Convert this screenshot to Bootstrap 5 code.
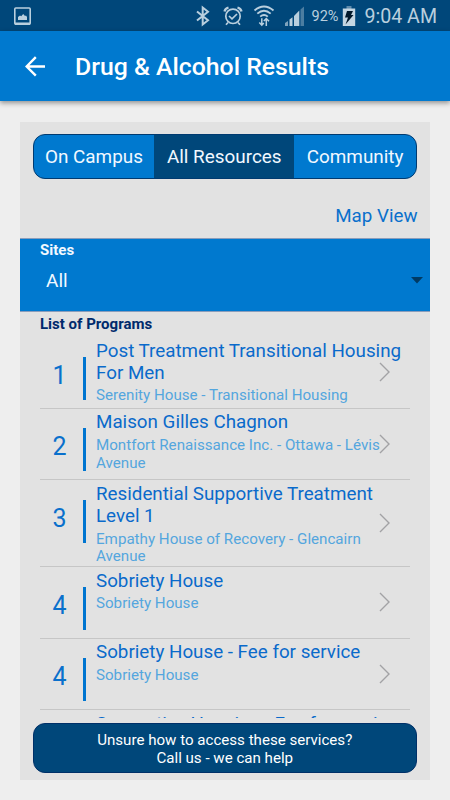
<!DOCTYPE html>
<html lang="en">
<head>
<meta charset="utf-8">
<meta name="viewport" content="width=device-width, initial-scale=1">
<title>Drug &amp; Alcohol Results</title>
<link href="https://cdn.jsdelivr.net/npm/bootstrap@5.3.0/dist/css/bootstrap.min.css" rel="stylesheet">
<style>
  body { font-family: Roboto, "Liberation Sans", sans-serif; background: #eee; height: 800px; overflow: hidden; }
  svg { display: block; flex: none; }
  .status { height: 31px; background: #00477a; color: #b9cfde; }
  .status-icons { padding-right: 13px; }
  .pct { font-size: 14.5px; line-height: 35px; padding-top: 2px; }
  .clock { font-size: 19.6px; line-height: 36px; padding-top: 2px; }
  .appbar { height: 70px; background: #0079cf; padding-left: 25px; box-shadow: 0 2px 5px rgba(0,0,0,.4); }
  .appbar h1 { font-size: 24.8px; font-weight: 500; margin-left: 29px; padding-top: 2px; white-space: nowrap; }
  .panel { width: 410px; height: 658px; margin: 21px 0 0 20px; background: #e2e2e2; }
  .segments { height: 45px; margin: 12px 13px 0 12.5px; border: 1.5px solid #003a70; border-radius: 12px; overflow: hidden; background: #0079cf; }
  .segments .btn { border: 0; border-radius: 0; padding: 2px 0 0; color: #f1f8ff; font-size: 18.9px; white-space: nowrap; }
  .segments .btn.active { background: #00477a; color: #f1f8ff; }
  .seg-a { width: 121px; } .seg-b { width: 140px; } .seg-c { width: 122px; }
  .map-link { height: 59px; padding: 26px 12.5px 0 0; font-size: 18.75px; line-height: 22px; color: #0a70cc; text-decoration: none; }
  .sites { height: 74px; background: #0079cf; border-top: 1px solid #8a9dbb; border-bottom: 1px solid #8a9dbb; color: #f1f8ff; padding: 2px 7px 0 20px; }
  .label { font-size: 15px; line-height: 18px; font-weight: 700; }
  .picked { font-size: 19px; line-height: 22px; padding: 11px 0 0 6px; }
  .caret { margin-top: 10px; }
  .programs-label { color: #002a6c; padding: 3px 0 0 20px; height: 25px; }
  .programs { height: 381px; margin: 0 20px; overflow: hidden; }
  .program { min-height: 71.7px; padding-top: 2.7px; border-bottom: 1px solid #c6c6c6; flex: none; }
  .rank { width: 43px; padding: 21px 0 0 12.5px; font-size: 25px; line-height: 29px; color: #0a70cc; flex: none; }
  .rule { width: 3px; height: 43px; margin-top: 17px; background: #0075d0; flex: none; }
  .words { padding-left: 10px; white-space: nowrap; min-width: 0; }
  .name { font-size: 18.8px; line-height: 22px; color: #0a6acb; }
  .site { font-size: 15.15px; line-height: 17.6px; margin-top: 3.7px; color: #54a6de; }
  .go { margin: 0 19px 3px 0; }
  .help { height: 50px; margin: 5px 13px 0 12.5px; background: #00477a; border: 1px solid #003068; border-radius: 12px; color: #fff; font-size: 15.1px; line-height: 17.6px; padding: 3px 0 0; }
  .help:hover { background: #00477a; color: #fff; }
</style>
</head>
<body class="d-flex flex-column">
<header class="status d-flex justify-content-between align-items-center">
  <svg width="36" height="31" viewBox="0 0 36 31"><path fill="none" stroke="#b9cfde" stroke-width="1.6" d="M15.8 8h13.4q1 0 1 1v14.2q0 1-1 1H15.8q-1 0-1-1V9q0-1 1-1z"/><path fill="#b9cfde" d="M15 22.5h15V25H15zM18 20v-3l2-1.5 1.2.8 2-2.3 1.8 2 1-.5 1 1.5v3z"/></svg>
  <div class="status-icons d-flex align-items-center">
    <svg width="116" height="31" viewBox="192 0 116 31" fill="none" stroke="#b9cfde">
      <path stroke-width="2" d="M197 11.5l11 8.8-5.3 4.2V7.5l5.3 4.2-11 8.8"/>
      <circle cx="233" cy="16.3" r="7.2" stroke-width="1.7"/>
      <path stroke-width="1.7" d="M229 16l3 2.8 5-4.8M228 22.5l-2 2.3M238 22.5l2 2.3"/>
      <path stroke-width="2.3" d="M224.5 11.5q.5-3 4-4M241.5 11.5q-.5-3-4-4"/>
      <path stroke-width="1.9" d="M254.5 10.5q9.5-8 19 0M257.3 13.6q6.7-5.8 13.4 0M260.2 16.6q3.8-3.3 7.6 0"/>
      <path stroke-width="1.5" d="M261.8 18.2v7M259.3 22.5l2.5 2.7 2-2.2M266.3 26v-7M263.8 21l2.5-2.5 2.7 2.7"/>
      <path fill="#7fa3bd" stroke="none" d="M285 23l3-2V26h-3z"/>
      <path fill="#b9cfde" stroke="none" d="M289.5 19.5l3-2.2V26h-3zM294 16l5.3-5.5V26H294z"/>
      <path fill="#4b7da1" stroke="none" d="M300.5 9.5l3.5-3V26h-3.5z"/>
    </svg>
    <span class="pct ms-1">92%</span>
    <svg class="ms-1" width="14" height="31" viewBox="0 0 14 31"><path fill="#5f8bac" d="M4.5 6h5v3h-5z"/><path fill="#c4d6e2" d="M.8 8.5h12.4V26H.8z"/><path fill="#02192b" d="M5 11h6l-2 4h2.5L3.5 24.5 6 17.5H3z"/></svg>
    <span class="clock ms-2">9:04 AM</span>
  </div>
</header>
<nav class="appbar d-flex align-items-center text-white">
  <svg width="21" height="21" viewBox="0 0 21 21" fill="none" stroke="#fff" stroke-width="2.4"><path d="M20 10.5H2M10.8 1.2L1.6 10.5l9.2 9.2"/></svg>
  <h1 class="mb-0">Drug &amp; Alcohol Results</h1>
</nav>
<main class="panel d-flex flex-column">
  <div class="segments d-flex flex-shrink-0">
    <button class="btn seg-a">On Campus</button>
    <button class="btn seg-b active">All Resources</button>
    <button class="btn seg-c">Community</button>
  </div>
  <a class="map-link d-block text-end flex-shrink-0" href="#">Map View</a>
  <section class="sites flex-shrink-0">
    <div class="label">Sites</div>
    <div class="d-flex justify-content-between align-items-center">
      <div class="picked">All</div>
      <svg class="caret" width="12" height="7" viewBox="0 0 12 7"><path fill="#003a63" d="M0 0h12L6 6.5z"/></svg>
    </div>
  </section>
  <div class="label programs-label flex-shrink-0">List of Programs</div>
  <section class="programs d-flex flex-column flex-shrink-0">
    <article class="program d-flex">
      <div class="rank">1</div><div class="rule"></div>
      <div class="words flex-fill w-50"><div class="name">Post Treatment Transitional Housing<br>For Men</div><div class="site">Serenity House - Transitional Housing</div></div>
      <svg class="go align-self-center" width="12" height="20" viewBox="0 0 12 20"><path fill="none" stroke="#a2a2a5" stroke-width="1.4" d="M1 1l9 9-9 9"/></svg>
    </article>
    <article class="program d-flex">
      <div class="rank">2</div><div class="rule"></div>
      <div class="words flex-fill w-50"><div class="name">Maison Gilles Chagnon</div><div class="site">Montfort Renaissance Inc. - Ottawa - Lévis<br>Avenue</div></div>
      <svg class="go align-self-center" width="12" height="20" viewBox="0 0 12 20"><path fill="none" stroke="#a2a2a5" stroke-width="1.4" d="M1 1l9 9-9 9"/></svg>
    </article>
    <article class="program d-flex">
      <div class="rank">3</div><div class="rule"></div>
      <div class="words flex-fill w-50"><div class="name">Residential Supportive Treatment<br>Level 1</div><div class="site">Empathy House of Recovery - Glencairn<br>Avenue</div></div>
      <svg class="go align-self-center" width="12" height="20" viewBox="0 0 12 20"><path fill="none" stroke="#a2a2a5" stroke-width="1.4" d="M1 1l9 9-9 9"/></svg>
    </article>
    <article class="program d-flex">
      <div class="rank">4</div><div class="rule"></div>
      <div class="words flex-fill w-50"><div class="name">Sobriety House</div><div class="site">Sobriety House</div></div>
      <svg class="go align-self-center" width="12" height="20" viewBox="0 0 12 20"><path fill="none" stroke="#a2a2a5" stroke-width="1.4" d="M1 1l9 9-9 9"/></svg>
    </article>
    <article class="program d-flex">
      <div class="rank">4</div><div class="rule"></div>
      <div class="words flex-fill w-50"><div class="name">Sobriety House - Fee for service</div><div class="site">Sobriety House</div></div>
      <svg class="go align-self-center" width="12" height="20" viewBox="0 0 12 20"><path fill="none" stroke="#a2a2a5" stroke-width="1.4" d="M1 1l9 9-9 9"/></svg>
    </article>
    <article class="program d-flex">
      <div class="rank"></div><div class="rule"></div>
      <div class="words"><div class="name">Supportive Housing - Fee for service</div></div>
    </article>
  </section>
  <button class="help btn flex-shrink-0">Unsure how to access these services?<br>Call us - we can help</button>
</main>
<script src="https://cdn.jsdelivr.net/npm/bootstrap@5.3.0/dist/js/bootstrap.bundle.min.js"></script>
</body>
</html>
